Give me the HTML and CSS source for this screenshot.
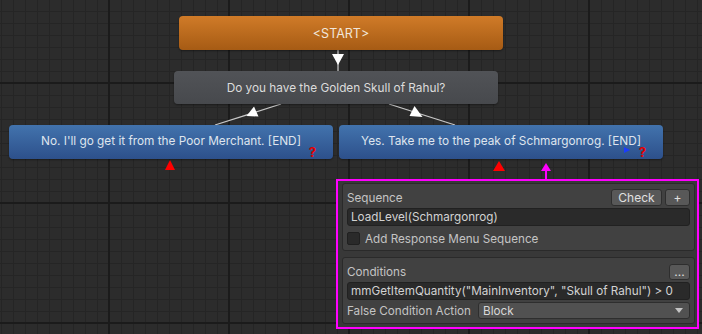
FILE: index.html
```html
<!DOCTYPE html>
<html lang="en">
  <head>
    <meta charset="UTF-8" />
    <title>Dialogue Editor</title>
    <link rel="stylesheet" href="styles.css">
  </head>
  <body>
    <div class="canvas">
      <svg class="links" width="702" height="334" viewBox="0 0 702 334">
        <line x1="338" y1="50" x2="338" y2="71" class="link" />
        <polygon points="332,54 344,54 338,65" class="arrow" />
        <line x1="215" y1="125" x2="281" y2="104" class="link" />
        <polygon points="246.5,116 258.5,116.5 254,106.5" class="arrow" />
        <line x1="455" y1="125" x2="389" y2="104" class="link" />
        <polygon points="409.5,116 422.5,117 414.5,106" class="arrow" />
        <polygon points="170,160 165,170 175,170" fill="#ff0000" />
        <polygon points="499,161 493,171 505,171" fill="#ff0000" />
        <polygon points="546,163 541,171 551,171" fill="#ff00ff" />
        <rect x="545" y="170" width="2" height="10" fill="#ff00ff" />
      </svg>

      <div class="node node-start">&lt;START&gt;</div>
      <div class="node node-npc">Do you have the Golden Skull of Rahul?</div>
      <div class="node node-pc node-left">
        <span class="node-text">No. I'll go get it from the Poor Merchant. [END]</span>
        <span class="mark-q">?</span>
      </div>
      <div class="node node-pc node-right">
        <span class="node-text">Yes. Take me to the peak of Schmargonrog. [END]</span>
        <span class="mark-seq"></span>
        <span class="mark-q">?</span>
      </div>

      <div class="inspector">
        <div class="group">
          <div class="row">
            <span class="label">Sequence</span>
            <button class="btn btn-check">Check</button>
            <button class="btn btn-plus">+</button>
          </div>
          <div class="field">LoadLevel(Schmargonrog)</div>
          <div class="check-row">
            <span class="checkbox"></span>
            <span class="label">Add Response Menu Sequence</span>
          </div>
        </div>
        <div class="group">
          <div class="row">
            <span class="label">Conditions</span>
            <button class="btn btn-more">...</button>
          </div>
          <div class="field">mmGetItemQuantity("MainInventory", "Skull of Rahul") &gt; 0</div>
          <div class="row">
            <span class="label label-fixed">False Condition Action</span>
            <div class="select">
              <span>Block</span>
              <svg width="8" height="5" viewBox="0 0 8 5"><polygon points="0,0 8,0 4,5" fill="#c4c4c4" /></svg>
            </div>
          </div>
        </div>
      </div>
    </div>
  </body>
</html>
```

FILE: styles.css
```css
body {
  margin: 0;
  font-family: Inter, 'Noto Sans', sans-serif;
  font-size: 12px;
  overflow: hidden;
}

.canvas {
  position: relative;
  width: 702px;
  height: 334px;
  overflow: hidden;
  background-color: #2c2c2c;
  background-image:
    linear-gradient(to right, #1b1b1b 2px, transparent 2px),
    linear-gradient(to bottom, #1b1b1b 2px, transparent 2px),
    linear-gradient(to right, #252525 1px, transparent 1px),
    linear-gradient(to bottom, #252525 1px, transparent 1px);
  background-size: 120px 120px, 120px 120px, 12px 12px, 12px 12px;
  background-position: 108px 0, 0 82px, 1px 0, 0 11px;
}

.links {
  position: absolute;
  left: 0;
  top: 0;
}

.link {
  stroke: #c8c8c8;
  stroke-width: 1.3;
}

.arrow {
  fill: #ffffff;
}

/* nodes */
.node {
  position: absolute;
  width: 324px;
  height: 34px;
  border-radius: 4px;
  display: flex;
  align-items: center;
  justify-content: center;
  color: #dcdcdc;
  font-size: 11.8px;
  box-shadow: 0 1px 2px rgba(0, 0, 0, 0.4);
}

.node-start {
  left: 179px;
  top: 16px;
  background: linear-gradient(to bottom, #d07b28, #a65b14);
  color: #f1e6da;
  font-size: 12.5px;
}

.node-npc {
  left: 174px;
  top: 71px;
  height: 33px;
  background: linear-gradient(to bottom, #515357, #47494d);
}

.node-pc {
  top: 125px;
  background: linear-gradient(to bottom, #4273ad, #2d508b);
  color: #dfe5ee;
}

.node-text {
  margin-top: -2px;
}

.node-left {
  left: 9px;
}

.node-right {
  left: 339px;
}

.mark-q {
  position: absolute;
  right: 17px;
  bottom: 1px;
  color: #e60000;
  font-weight: bold;
  font-size: 13px;
  line-height: 11px;
}

.mark-seq {
  position: absolute;
  right: 33px;
  bottom: 6px;
  width: 0;
  height: 0;
  border-top: 3px solid transparent;
  border-bottom: 3px solid transparent;
  border-left: 6px solid #1a3cff;
}

/* inspector */
.inspector {
  position: absolute;
  left: 336px;
  top: 179px;
  width: 353px;
  height: 141px;
  border: 2px solid #ff00ff;
  background: #383838;
  padding: 2px 2px 3px 4px;
  display: flex;
  flex-direction: column;
  gap: 6px;
  color: #c4c4c4;
  font-size: 11.7px;
}

.inspector * {
  box-sizing: border-box;
}

.group {
  background: #414141;
  border: 1px solid #2a2a2a;
  border-radius: 3px;
  padding: 5px 4px 0 4px;
  display: flex;
  flex-direction: column;
  gap: 2px;
  height: 68px;
}

.group + .group {
  height: 67px;
}

.row {
  display: flex;
  align-items: center;
  height: 17px;
}

.label {
  flex: 1;
  color: #c4c4c4;
}

.label-fixed {
  flex: 0 0 131px;
}

.btn {
  height: 17px;
  padding: 0;
  border: 1px solid #2e2e2e;
  border-radius: 3px;
  background: #585858;
  color: #e0e0e0;
  font-family: inherit;
  font-size: 12px;
  line-height: 14px;
}

.btn-check {
  width: 51px;
}

.btn-plus {
  width: 25px;
  margin-left: 3px;
}

.btn-more {
  width: 21px;
  height: 16px;
}

.field {
  height: 18px;
  background: #2a2a2a;
  border: 1px solid #212121;
  border-radius: 3px;
  padding: 0 3px;
  line-height: 16px;
  color: #d2d2d2;
  white-space: nowrap;
  overflow: hidden;
}

.check-row {
  display: flex;
  align-items: center;
  gap: 5px;
  height: 17px;
  margin-top: 2px;
}

.checkbox {
  width: 13px;
  height: 13px;
  background: #2a2a2a;
  border: 1px solid #202020;
  border-radius: 2px;
}

.select {
  flex: 1;
  height: 17px;
  background: #515151;
  border: 1px solid #2e2e2e;
  border-radius: 3px;
  padding: 0 6px 0 4px;
  display: flex;
  align-items: center;
  justify-content: space-between;
  color: #d8d8d8;
}
```
